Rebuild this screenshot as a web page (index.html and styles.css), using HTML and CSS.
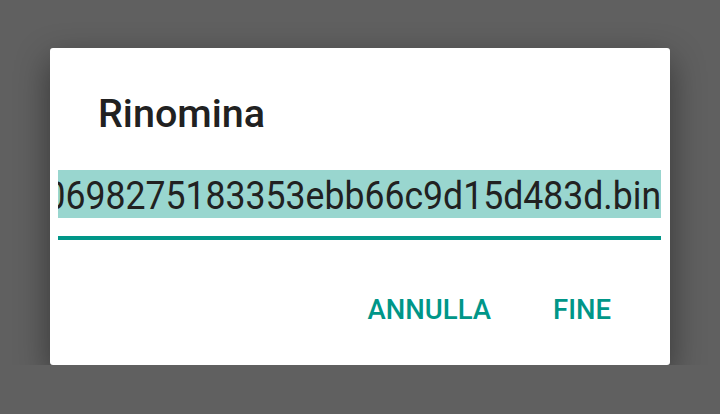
FILE: index.html
```html
<!DOCTYPE html>
<html>
    <head>
        <meta charset="utf-8">
        <title>Rinomina</title>
        <link rel="stylesheet" href="styles.css">
    </head>
    <body>
        <div class="dialog">
            <h1 class="title">Rinomina</h1>
            <div class="field">
                <div class="value"><span class="selected">0698275183353ebb66c9d15d483d.bin</span></div>
            </div>
            <div class="actions">
                <button class="btn">ANNULLA</button>
                <button class="btn">FINE</button>
            </div>
        </div>
    </body>
</html>
```

FILE: styles.css
```css
html {background:#606060;}
body {margin:0;padding:48px 50px 0 50px;font-family:Roboto, "Noto Sans", sans-serif;}
.dialog {background:#fff;border-radius:3px;box-shadow:0 12px 34px rgba(0,0,0,0.45);padding:44px 9px 35px 8px;}
.title {margin:0 0 34px 40px;font-size:39.5px;font-weight:500;line-height:44px;color:#212121;}
.field {padding-bottom:18px;border-bottom:4px solid #009688;}
.value {overflow:hidden;display:flex;justify-content:flex-end;white-space:nowrap;height:48px;}
.selected {background:#99d6cf;color:#212121;font-size:38px;line-height:44px;padding:4px 0 0 60px;transform:scaleX(0.937);transform-origin:right center;}
.actions {display:flex;justify-content:flex-end;gap:30px;margin-top:50px;padding-right:34px;}
.btn {background:none;border:0;padding:0 16px;font-family:inherit;font-size:27.5px;font-weight:500;line-height:40px;color:#009688;}
```
